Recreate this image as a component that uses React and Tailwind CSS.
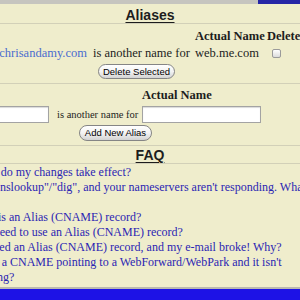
export default function App() {
  const rule = <div className="h-px shrink-0 bg-[#d2d0b8]" />;

  return (
    <div className="w-[300px] h-[300px] overflow-hidden bg-[#efedcc] flex flex-col font-['Liberation_Serif','Times_New_Roman',serif] text-[#1d1d1d]">
      {/* top strip */}
      <div className="flex h-[4px] shrink-0">
        <div className="flex-1 bg-[#c6c5bf]" />
        <div className="w-[42px] bg-[#2626a6]" />
      </div>

      <div className="ml-[-40px] w-[380px] flex flex-col flex-1 min-h-0">
        {/* Aliases */}
        <div className="h-[19px] shrink-0 flex items-end justify-center pb-[1px]">
          <span className="font-['Liberation_Sans',Arial,sans-serif] font-bold text-[14px] leading-none underline underline-offset-2">Aliases</span>
        </div>
        {rule}

        <div className="shrink-0 pt-[5px] pb-[4px]">
          <div className="ml-[20px] grid grid-cols-[110px_101px_74px_45px] h-[14px] leading-[14px] text-[12.5px] font-bold whitespace-nowrap">
            <div />
            <div />
            <div className="pl-[4px]">Actual Name</div>
            <div className="pl-[2px]">Delete</div>
          </div>
          <div className="mt-[3px] ml-[20px] grid grid-cols-[110px_101px_74px_45px] h-[14px] leading-[14px] text-[12.5px] whitespace-nowrap items-center">
            <div className="text-right pr-[3px] text-[#4a6ccf]">chrisandamy.com</div>
            <div className="pl-[3px]">is another name for</div>
            <div className="pl-[4px]">web.me.com</div>
            <div className="pl-[7px] flex items-center">
              <span className="w-[9px] h-[9px] rounded-[2px] border border-[#9a9a9a] bg-linear-to-b from-white to-[#dcdcdc]" />
            </div>
          </div>
          <div className="mt-[4px] pl-[138px] flex">
            <button className="h-[15px] w-[77px] rounded-full border border-[#858585] bg-linear-to-b from-white via-[#f3f3f3] to-[#d3d3d3] font-['Liberation_Sans',Arial,sans-serif] text-[9.5px] leading-none text-black">
              Delete Selected
            </button>
          </div>
        </div>
        {rule}

        {/* add new alias */}
        <div className="shrink-0 pt-[4px] pb-[4px]">
          <div className="pl-[182px] h-[14px] leading-[14px] text-[12.5px] font-bold whitespace-nowrap">Actual Name</div>
          <div className="mt-[4px] flex items-center h-[17px]">
            <div className="ml-[9px] w-[80px] h-[17px] bg-white border border-[#a3a3a3] shadow-[inset_0_1px_1px_rgba(0,0,0,0.15)]" />
            <span className="ml-[8px] w-[78px] text-[10.5px] whitespace-nowrap">is another name for</span>
            <div className="ml-[7px] w-[119px] h-[17px] bg-white border border-[#a3a3a3] shadow-[inset_0_1px_1px_rgba(0,0,0,0.15)]" />
          </div>
          <div className="mt-[2px] pl-[119px] flex">
            <button className="h-[16px] w-[73px] rounded-full border border-[#858585] bg-linear-to-b from-white via-[#f3f3f3] to-[#d3d3d3] font-['Liberation_Sans',Arial,sans-serif] text-[9.5px] leading-none text-black">
              Add New Alias
            </button>
          </div>
        </div>
        {rule}

        {/* FAQ */}
        <div className="h-[17px] shrink-0 flex items-end justify-center pb-[1px]">
          <span className="font-['Liberation_Sans',Arial,sans-serif] font-bold text-[14px] leading-none underline underline-offset-2">FAQ</span>
        </div>
        {rule}

        <div className="flex-1 min-h-0 overflow-hidden pl-[9px] pt-[1px] text-[12px] leading-[15px] text-[#2b25b3] whitespace-nowrap">
          <div>When do my changes take effect?</div>
          <div>I use "nslookup"/"dig", and your nameservers aren't responding. What</div>
          <div>now?</div>
          <div>What is an Alias (CNAME) record?</div>
          <div>Do I need to use an Alias (CNAME) record?</div>
          <div>I created an Alias (CNAME) record, and my e-mail broke! Why?</div>
          <div>I have a CNAME pointing to a WebForward/WebPark and it isn't</div>
          <div>working?</div>
        </div>
      </div>

      {/* bottom bar */}
      <div className="shrink-0 h-[2px] bg-[#b9b8b0]" />
      <div className="shrink-0 h-[11px] bg-[#1d12e6]" />
    </div>
  );
}
